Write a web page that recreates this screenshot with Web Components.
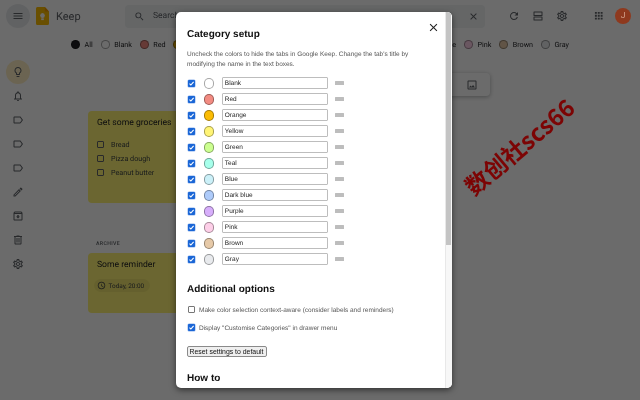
<!DOCTYPE html>
<html lang="en"><head><meta charset="utf-8"><title>Keep</title>
<style>
html,body{margin:0;padding:0;width:640px;height:400px;overflow:hidden;background:#fff;font-family:Roboto,"Liberation Sans",sans-serif;text-rendering:geometricPrecision}
</style></head><body>
<keep-page></keep-page>
<script>
const P={
menu:'M3 18h18v-2H3v2zm0-5h18v-2H3v2zm0-7v2h18V6H3z',
search:'M15.5 14h-.79l-.28-.27A6.471 6.471 0 0 0 16 9.5 6.5 6.5 0 1 0 9.5 16c1.61 0 3.09-.59 4.23-1.57l.27.28v.79l5 4.99L20.49 19l-4.99-5zm-6 0C7.01 14 5 11.99 5 9.5S7.01 5 9.5 5 14 7.01 14 9.5 11.99 14 9.5 14z',
close:'M19 6.41L17.59 5 12 10.59 6.41 5 5 6.41 10.59 12 5 17.59 6.41 19 12 13.41 17.59 19 19 17.59 13.41 12z',
refresh:'M17.65 6.35A7.958 7.958 0 0 0 12 4c-4.42 0-7.99 3.58-7.99 8s3.57 8 7.99 8c3.73 0 6.84-2.55 7.73-6h-2.08A5.99 5.99 0 0 1 12 18c-3.31 0-6-2.69-6-6s2.69-6 6-6c1.66 0 3.14.69 4.22 1.78L13 11h7V4l-2.35 2.35z',
agenda:'M4 3h16a1 1 0 0 1 1 1v7a1 1 0 0 1-1 1H4a1 1 0 0 1-1-1V4a1 1 0 0 1 1-1zm1 2v5h14V5zM4 13h16a1 1 0 0 1 1 1v6a1 1 0 0 1-1 1H4a1 1 0 0 1-1-1v-6a1 1 0 0 1 1-1zm1 2v4h14v-4z',
gear:'M19.43 12.98c.04-.32.07-.64.07-.98s-.03-.66-.07-.98l2.11-1.65c.19-.15.24-.42.12-.64l-2-3.46c-.12-.22-.39-.3-.61-.22l-2.49 1c-.52-.4-1.08-.73-1.69-.98l-.38-2.65C14.46 2.18 14.25 2 14 2h-4c-.25 0-.46.18-.49.42l-.38 2.65c-.61.25-1.17.59-1.69.98l-2.49-1c-.23-.09-.49 0-.61.22l-2 3.46c-.13.22-.07.49.12.64l2.11 1.65c-.04.32-.07.65-.07.98s.03.66.07.98l-2.11 1.65c-.19.15-.24.42-.12.64l2 3.46c.12.22.39.3.61.22l2.49-1c.52.4 1.08.73 1.69.98l.38 2.65c.03.24.24.42.49.42h4c.25 0 .46-.18.49-.42l.38-2.65c.61-.25 1.17-.59 1.69-.98l2.49 1c.23.09.49 0 .61-.22l2-3.46c.12-.22.07-.49-.12-.64l-2.11-1.65zm-1.98-1.71c.04.31.05.52.05.73s-.02.43-.05.73l-.14 1.13.89.7 1.08.84-.7 1.21-1.27-.51-1.04-.42-.9.68c-.43.32-.84.56-1.25.73l-1.06.43-.16 1.13-.2 1.35h-1.4l-.19-1.35-.16-1.13-1.06-.43c-.43-.18-.83-.41-1.23-.71l-.91-.7-1.06.43-1.27.51-.7-1.21 1.08-.84.89-.7-.14-1.13c-.03-.31-.05-.54-.05-.74s.02-.43.05-.73l.14-1.13-.89-.7-1.08-.84.7-1.21 1.27.51 1.04.42.9-.68c.43-.32.84-.56 1.25-.73l1.06-.43.16-1.13.2-1.35h1.39l.19 1.35.16 1.13 1.06.43c.43.18.83.41 1.23.71l.91.7 1.06-.43 1.27-.51.7 1.21-1.07.85-.89.7.14 1.13zM12 8c-2.21 0-4 1.79-4 4s1.79 4 4 4 4-1.79 4-4-1.79-4-4-4zm0 6c-1.1 0-2-.9-2-2s.9-2 2-2 2 .9 2 2-.9 2-2 2z',
apps:'M4 8h4V4H4v4zm6 12h4v-4h-4v4zm-6 0h4v-4H4v4zm0-6h4v-4H4v4zm6 0h4v-4h-4v4zm6-10v4h4V4h-4zm-6 4h4V4h-4v4zm6 6h4v-4h-4v4zm0 6h4v-4h-4v4z',
bulb:'M9 21c0 .55.45 1 1 1h4c.55 0 1-.45 1-1v-1H9v1zm3-19C8.14 2 5 5.14 5 9c0 2.38 1.19 4.47 3 5.74V17c0 .55.45 1 1 1h6c.55 0 1-.45 1-1v-2.26c1.81-1.27 3-3.36 3-5.74 0-3.86-3.14-7-7-7zm2.85 11.1l-.85.6V16h-4v-2.3l-.85-.6C7.8 12.16 7 10.63 7 9c0-2.76 2.24-5 5-5s5 2.24 5 5c0 1.63-.8 3.16-2.15 4.1z',
bell:'M12 22c1.1 0 2-.9 2-2h-4c0 1.1.9 2 2 2zm6-6v-5c0-3.07-1.63-5.64-4.5-6.32V4c0-.83-.67-1.5-1.5-1.5s-1.5.67-1.5 1.5v.68C7.64 5.36 6 7.92 6 11v5l-2 2v1h16v-1l-2-2zm-2 1H8v-6c0-2.48 1.51-4.5 4-4.5s4 2.02 4 4.5v6z',
label:'M17.63 5.84C17.27 5.33 16.67 5 16 5L5 5.01C3.9 5.01 3 5.9 3 7v10c0 1.1.9 1.99 2 1.99L16 19c.67 0 1.27-.33 1.63-.84L22 12l-4.37-6.16zM16 17H5V7h11l3.55 5L16 17z',
pencil:'M3 17.25V21h3.75L17.81 9.94l-3.75-3.75L3 17.25zM5.92 19H5v-.92l9.06-9.06.92.92L5.92 19zM20.71 5.63l-2.34-2.34c-.2-.2-.45-.29-.71-.29s-.51.1-.7.29l-1.83 1.83 3.75 3.75 1.83-1.83c.39-.39.39-1.02 0-1.41z',
archive:'M20.54 5.23l-1.39-1.68C18.88 3.21 18.47 3 18 3H6c-.47 0-.88.21-1.16.55L3.46 5.23C3.17 5.57 3 6.02 3 6.5V19c0 1.1.9 2 2 2h14c1.1 0 2-.9 2-2V6.5c0-.48-.17-.93-.46-1.27zM6.24 5h11.52l.83 1H5.42l.82-1zM5 19V8h14v11H5zm8.45-9h-2.9v3H8l4 4 4-4h-2.55z',
trash:'M15 4V3H9v1H4v2h1v13c0 1.1.9 2 2 2h10c1.1 0 2-.9 2-2V6h1V4h-5zm2 15H7V6h10v13zM9 8h2v9H9zm4 0h2v9h-2z',
clock:'M11.99 2C6.47 2 2 6.48 2 12s4.47 10 9.99 10C17.52 22 22 17.52 22 12S17.52 2 11.99 2zM12 20c-4.42 0-8-3.58-8-8s3.58-8 8-8 8 3.58 8 8-3.58 8-8 8zm.5-13H11v6l5.25 3.15.75-1.23-4.5-2.67z',
image:'M19 5v14H5V5h14m0-2H5c-1.1 0-2 .9-2 2v14c0 1.1.9 2 2 2h14c1.1 0 2-.9 2-2V5c0-1.1-.9-2-2-2zm-4.86 8.86l-3 3.87L9 13.14 6 17h12l-3.86-5.14z'
};
const def=(name,html,init)=>customElements.define(name,class extends HTMLElement{
  connectedCallback(){ if(this.shadowRoot) return; const r=this.attachShadow({mode:'open'}); r.innerHTML=typeof html==='function'?html(this):html; if(init) init(r,this);}
});
const attr=(e,n,d='')=>e.getAttribute(n)??d;

def('app-icon',e=>`<style>:host{display:inline-flex;width:var(--s,12px);height:var(--s,12px);flex:none;color:inherit}svg{width:100%;height:100%;display:block;fill:currentColor}</style><svg viewBox="0 0 24 24"><path d="${P[attr(e,'name')]}"/></svg>`);

def('icon-button',e=>`<style>:host{display:flex;align-items:center;justify-content:center;width:24px;height:24px;border-radius:50%;flex:none;color:#5f6368;background:var(--bg,transparent)}app-icon{--s:var(--is,12px)}</style><app-icon name="${attr(e,'name')}"></app-icon>`);

def('check-box',e=>`<style>:host{display:block;width:7px;height:7px;flex:none;box-sizing:border-box;border-radius:1px;${e.hasAttribute('checked')?'background:#1a66d6;box-shadow:0 0 0 .5px #8fb4ee;':'background:#fff;border:.8px solid #767676;'}}svg{display:block;width:100%;height:100%}</style>${e.hasAttribute('checked')?'<svg viewBox="0 0 14 14"><path d="M3 7.4l2.7 2.7L11.2 3.6" fill="none" stroke="#fff" stroke-width="2.2"/></svg>':''}`);

def('keep-logo',`<style>:host{display:block;width:13px;height:18px;flex:none}svg{display:block;width:100%;height:100%}</style>
<svg viewBox="0 0 14 18" preserveAspectRatio="none"><path d="M1.5 0H9.5L14 4.5V16.5a1.5 1.5 0 0 1-1.5 1.5h-11A1.5 1.5 0 0 1 0 16.5V1.5A1.5 1.5 0 0 1 1.5 0z" fill="#fbbc04"/><path d="M9.5 0L14 4.5H9.5z" fill="#f29900"/><circle cx="7" cy="8.6" r="2.5" fill="#fff"/><rect x="5.6" y="11.3" width="2.8" height="1.8" fill="#fff"/></svg>`);

def('keep-header',`<style>
:host{display:flex;align-items:center;height:32px;box-sizing:border-box;padding-left:6px;color:#5f6368;font-family:Roboto,sans-serif}
.menu{--bg:#e8eaed;margin-right:6px}
keep-logo{margin-right:7px}
.name{font-size:11px;width:69px}
.search{display:flex;align-items:center;width:360px;height:23px;background:#f1f3f4;border-radius:4px;box-sizing:border-box;margin-right:17px}
.search icon-button{--is:11px}
.search span{flex:1;font-size:8.5px;margin-left:2px}
.tools{display:flex;align-items:center}
.apps{margin-left:13px;--is:11.5px}
.avatar{position:relative;z-index:12;width:16px;height:16px;border-radius:50%;background:#8e391e;color:#d3a48e;font-size:8.5px;display:flex;align-items:center;justify-content:center;margin-left:4px}
</style>
<icon-button class="menu" name="menu"></icon-button><keep-logo></keep-logo><span class="name">Keep</span>
<div class="search"><icon-button name="search" style="margin-left:2px"></icon-button><span>Search</span><icon-button name="close"></icon-button></div>
<div class="tools"><icon-button name="refresh"></icon-button><icon-button name="agenda"></icon-button><icon-button name="gear"></icon-button><icon-button class="apps" name="apps"></icon-button><span class="avatar">J</span></div>`);

def('color-chip',e=>`<style>:host{display:inline-flex;align-items:center;gap:4.5px;font:400 7.2px Roboto,sans-serif;color:#202124;white-space:nowrap}
i{display:block;width:9px;height:9px;border-radius:50%;box-sizing:border-box;border:.7px solid rgba(0,0,0,.35);background:${attr(e,'color')}}</style><i></i><slot></slot>`);

def('color-filter',`<style>:host{display:flex;justify-content:center;align-items:center;gap:7.9px;height:24px}</style><slot></slot>`);

def('side-nav',`<style>:host{display:flex;flex-direction:column;padding-left:6px;color:#5f6368}</style><slot></slot>`);

def('note-bar',`<style>:host{display:flex;justify-content:flex-end;align-items:center;box-sizing:border-box;width:300px;height:23px;margin-left:102px;border-radius:4px;background:#fff;box-shadow:0 1px 4px rgba(60,64,67,.4);color:#5f6368;padding-right:6px}</style><icon-button name="image"></icon-button>`);

def('note-card',e=>`<style>:host{display:block;box-sizing:border-box;width:180px;height:${attr(e,'h','92')}px;background:#fff475;border-radius:4px;padding:7px 9px;color:#202124;font-family:Roboto,sans-serif}
h3{margin:0 0 8px;font:400 8.6px/11px Roboto,sans-serif}</style><h3>${attr(e,'title')}</h3><slot></slot>`);

def('note-item',`<style>:host{display:flex;align-items:center;gap:7px;height:14.4px;font:7.2px Roboto,sans-serif;color:#3c4043}
i{display:block;width:7px;height:7px;box-sizing:border-box;border:1px solid #5f6368;border-radius:1px}</style><i></i><slot></slot>`);

def('reminder-chip',`<style>:host{display:flex;width:fit-content;align-items:center;gap:2.5px;height:13px;padding:0 6px 0 3px;margin-left:-3px;border-radius:7px;background:rgba(0,0,0,.06);font:400 6.4px Roboto,sans-serif;color:#3c4043}app-icon{--s:9px}</style><app-icon name="clock"></app-icon><slot></slot>`);

def('keep-notes',`<style>:host{display:block;padding-top:14px}
.gap1{height:15px}.lab{font:500 5.2px/6px Roboto,sans-serif;letter-spacing:.35px;color:#5f6368;margin:38px 0 6px 8px}
</style><note-bar></note-bar><div class="gap1"></div>
<note-card title="Get some groceries"><note-item>Bread</note-item><note-item>Pizza dough</note-item><note-item>Peanut butter</note-item></note-card>
<div class="lab">ARCHIVE</div>
<note-card title="Some reminder" h="60"><reminder-chip>Today, 20:00</reminder-chip></note-card>`);

def('category-row',e=>`<style>:host{display:flex;align-items:center;height:16px;font:6.5px "Liberation Sans",Arial,sans-serif}
check-box{margin-left:1.3px}
i{display:block;width:10.5px;height:10.5px;border-radius:50%;box-sizing:border-box;border:.7px solid rgba(0,0,0,.35);margin-left:8.5px;background:${attr(e,'color')};flex:none}
.t{box-sizing:border-box;width:106px;height:12px;border:1px solid #bdbdbd;border-radius:1px;margin-left:7.5px;padding:0 2px;color:#222;flex:none;display:flex;align-items:center}
b{display:block;width:8.5px;height:4px;background:#bdbdbd;margin-left:7.5px;border-radius:.5px;flex:none}
</style><check-box checked></check-box><i></i><span class="t">${attr(e,'label')}</span><b></b>`);

def('option-row',e=>`<style>:host{display:flex;align-items:center;height:10px;font:6.5px "Liberation Sans",Arial,sans-serif;color:#555;margin-left:1.3px}
check-box{margin:-1px 3.7px 0 0}</style><check-box ${e.hasAttribute('checked')?'checked':''}></check-box><slot></slot>`);

def('setup-dialog',`<style>
:host{position:absolute;left:176px;top:12px;width:276px;height:376px;z-index:11;background:#fff;border-radius:5px;overflow:hidden;display:flex;box-shadow:0 2px 6px rgba(0,0,0,.55);font-family:"Liberation Sans",Arial,sans-serif;color:#111}
.body{flex:1;min-width:0;padding:16px 0 0 11px;box-sizing:border-box;overflow:hidden;position:relative}
.rail{width:7px;background:#f7f7f7;flex:none;border-left:.5px solid #e8e8e8;box-sizing:border-box}
.thumb{height:233px;width:4.5px;background:#c4c4c4}
.top{display:flex;justify-content:space-between;align-items:flex-start;height:15px}
h2{margin:0;font-size:10px;line-height:14px;font-weight:700;color:#111}
.x{color:#222;--s:13px;margin:-7px 5px 0 0}
p{margin:7px 0 6px;font-size:6.5px;line-height:9.7px;color:#555;width:240px}
.rows{display:block}
.opts{display:flex;flex-direction:column;gap:8px;margin-top:8px}
h2.b{margin-top:16px}
button{display:block;margin:13px 0 0 -.5px;box-sizing:border-box;width:80px;height:11px;padding:0;font:6.9px "Liberation Sans",Arial,sans-serif;color:#111;background:#efefef;border:.8px solid #8a8a8a;border-radius:2px;white-space:nowrap}
h2.h{margin-top:15px}
</style>
<div class="body">
<div class="top"><h2>Category setup</h2><app-icon class="x" name="close"></app-icon></div>
<p>Uncheck the colors to hide the tabs in Google Keep. Change the tab's title by modifying the name in the text boxes.</p>
<div class="rows">
<category-row color="#ffffff" label="Blank"></category-row>
<category-row color="#f28b82" label="Red"></category-row>
<category-row color="#fbbc04" label="Orange"></category-row>
<category-row color="#fff475" label="Yellow"></category-row>
<category-row color="#ccff90" label="Green"></category-row>
<category-row color="#a7ffeb" label="Teal"></category-row>
<category-row color="#cbf0f8" label="Blue"></category-row>
<category-row color="#aecbfa" label="Dark blue"></category-row>
<category-row color="#d7aefb" label="Purple"></category-row>
<category-row color="#fdcfe8" label="Pink"></category-row>
<category-row color="#e6c9a8" label="Brown"></category-row>
<category-row color="#e8eaed" label="Gray"></category-row>
</div>
<h2 class="b">Additional options</h2>
<div class="opts"><option-row>Make color selection context-aware (consider labels and reminders)</option-row><option-row checked>Display "Customise Categories" in drawer menu</option-row></div>
<button>Reset settings to default</button>
<h2 class="h">How to</h2>
</div>
<div class="rail"><div class="thumb"></div></div>`);

def('keep-page',`<style>
:host{display:block;position:relative;width:640px;height:400px;overflow:hidden;background:#fff;filter:blur(.3px)}
.row{display:grid;grid-template-columns:88px 1fr;margin-top:3px}
.dim{position:absolute;inset:0;background:rgba(0,0,0,.58);z-index:10}
.wm{position:absolute;left:452px;top:131px;z-index:12;font:700 23.5px "Noto Sans CJK SC","Liberation Sans",sans-serif;color:#7c0404;transform:rotate(-40deg);white-space:nowrap;line-height:30px}
.on{--bg:#feefc3}
side-nav{margin-top:.5px}
</style>
<keep-header></keep-header>
<color-filter>
<color-chip color="#202124">All</color-chip><color-chip color="#fff">Blank</color-chip><color-chip color="#f28b82">Red</color-chip><color-chip color="#fbbc04">Orange</color-chip><color-chip color="#fff475">Yellow</color-chip><color-chip color="#ccff90">Green</color-chip><color-chip color="#a7ffeb">Teal</color-chip><color-chip color="#cbf0f8">Blue</color-chip><color-chip color="#aecbfa">Dark blue</color-chip><color-chip color="#d7aefb">Purple</color-chip><color-chip color="#fdcfe8">Pink</color-chip><color-chip color="#e6c9a8">Brown</color-chip><color-chip color="#e8eaed">Gray</color-chip>
</color-filter>
<div class="row">
<side-nav><icon-button class="on" name="bulb"></icon-button><icon-button name="bell"></icon-button><icon-button name="label"></icon-button><icon-button name="label"></icon-button><icon-button name="label"></icon-button><icon-button name="pencil"></icon-button><icon-button name="archive"></icon-button><icon-button name="trash"></icon-button><icon-button name="gear"></icon-button></side-nav>
<keep-notes></keep-notes>
</div>
<div class="dim"></div>
<setup-dialog></setup-dialog>
<div class="wm">数创社scs66</div>`);
</script>
</body></html>
